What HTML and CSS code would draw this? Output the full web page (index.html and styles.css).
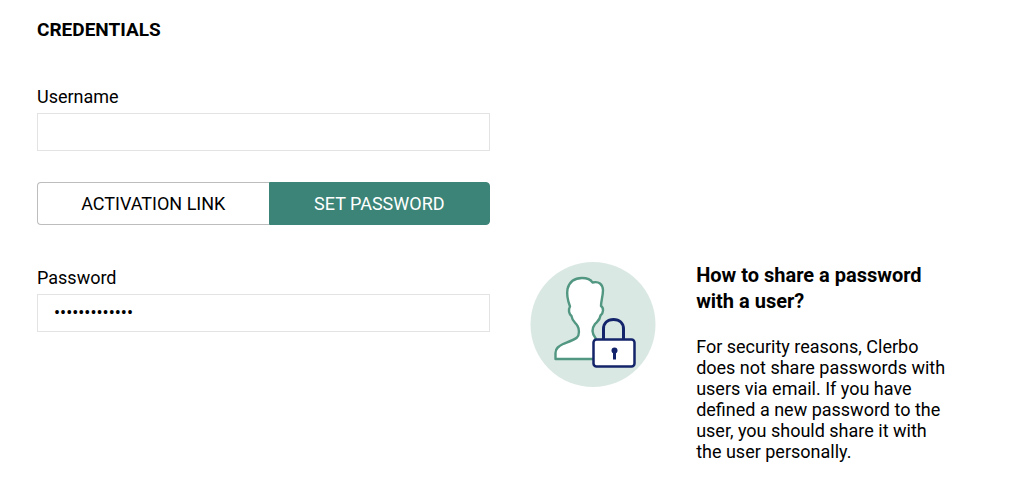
FILE: index.html
```html
<!DOCTYPE html>
<html lang="en">
<head>
<meta charset="utf-8">
<meta name="viewport" content="width=device-width, initial-scale=1">
<title>Credentials</title>
<link rel="stylesheet" href="styles.css">
</head>
<body>
<form class="credentials">
  <h2 class="section-title">CREDENTIALS</h2>
  <div class="columns">
    <div class="account">
      <div class="field">
        <label class="label" for="username">Username</label>
        <input class="input" id="username" type="text" autocomplete="off">
      </div>
      <div class="toggle">
        <button class="option" type="button" aria-pressed="false">ACTIVATION LINK</button>
        <button class="option option-active" type="button" aria-pressed="true">SET PASSWORD</button>
      </div>
    </div>
    <div class="field password-field">
      <label class="label" for="password">Password</label>
      <input class="input" id="password" type="password" value="abcdefghijklm" autocomplete="off">
    </div>
    <aside class="help">
      <svg class="help-icon" viewBox="0 0 126 126" aria-hidden="true">
        <circle cx="63" cy="62.500" r="62.500" fill="#dae8e4"/>
        <path d="M25.500 97V91C25.500 86 29 84 33 82C38 80 44 78 47 75.500C49.500 73 49.500 67 47.500 64C46 61 42 59 41.500 54C39 52 38 48 40 44.500C37.500 38 36.500 33 37.500 27C39.500 19 45 16 52 16C57 16 61 18 62.500 20.500C69 19 72.500 22 73 28C73 34 71 39 71 44C74 46 73.500 51 70.500 53.500C70 58 68 59 65 62C62 66 61.500 71 65.500 76V97Z" fill="#fff" stroke="#529781" stroke-width="2.400" stroke-linejoin="round"/>
        <path d="M73.500 78V67C73.500 61 77.500 57.500 83.500 57.500S93.500 61 93.500 67V78" fill="none" stroke="#14246a" stroke-width="3"/>
        <rect x="63.500" y="77.500" width="41" height="27" rx="3" fill="#fff" stroke="#14246a" stroke-width="2.500"/>
        <circle cx="84.500" cy="88.500" r="3" fill="#14246a"/>
        <path d="M84.500 89v8.500" stroke="#14246a" stroke-width="3"/>
      </svg>
      <div class="help-text">
        <h3 class="help-title">How to share a password with a user?</h3>
        <p class="help-body">For security reasons, Clerbo does not share passwords with users via email. If you have defined a new password to the user, you should share it with the user personally.</p>
      </div>
    </aside>
  </div>
</form>
</body>
</html>
```
FILE: styles.css
```css
* {
  box-sizing: border-box;
}

body {
  margin: 0;
  background: #fff;
  color: #000;
  font-family: Roboto, "Liberation Sans", sans-serif;
  font-size: 18px;
  line-height: 22px;
}

.credentials {
  padding: 19px 77px 19px 37px;
}

.section-title {
  margin: 0 0 45px;
  font-size: 19px;
  line-height: 22px;
}

.columns {
  display: grid;
  grid-template-columns: 25fr 23fr;
  column-gap: 40px;
  row-gap: 37px;
}

.account {
  grid-column: 1;
}

.field {
  display: flex;
  flex-direction: column;
  gap: 5px;
}

.password-field {
  grid-column: 1;
  grid-row: 2;
  margin-top: 5px;
}

.input {
  width: 100%;
  height: 38px;
  padding: 0 16px 2px;
  border: 1px solid #e3e3e3;
  background: #fff;
  color: #000;
  font: inherit;
}

.toggle {
  display: flex;
  height: 43px;
  margin-top: 31px;
}

.option {
  flex: 221 1 0;
  padding: 0;
  border: 1px solid #3b8477;
  border-radius: 0 4px 4px 0;
  background: #fff;
  color: #000;
  font: inherit;
}

.option:first-child {
  flex-grow: 232;
  border-color: #bdbdbd;
  border-right: 0;
  border-radius: 4px 0 0 4px;
}

.option-active {
  background: #3b8477;
  color: #fff;
}

.help {
  grid-column: 2;
  grid-row: 2;
  display: flex;
  align-items: flex-start;
  gap: 40px;
}

.help-icon {
  flex: 0 0 126px;
  height: 126px;
}

.help-text {
  flex: 1;
}

.help-title {
  margin: 0 0 22px;
  font-size: 20px;
  line-height: 26px;
}

.help-body {
  margin: 0;
  line-height: 21px;
}
```
